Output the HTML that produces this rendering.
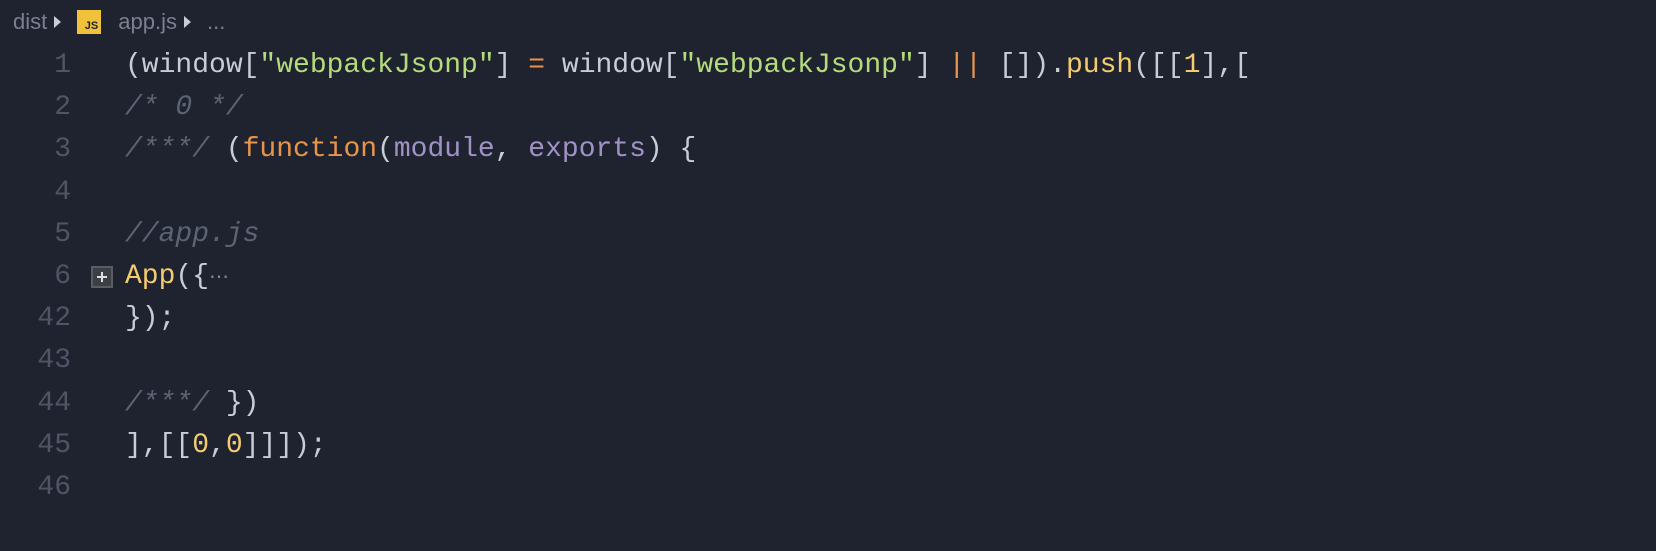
<!DOCTYPE html>
<html><head><meta charset="utf-8"><style>
body{margin:0;width:1656px;height:482px;background:#1f2330;overflow:hidden;font-family:"Liberation Mono",monospace;}
.bc{position:absolute;top:7px;left:13px;font-family:"Liberation Sans",sans-serif;font-size:22px;color:#7a8090;height:28px;line-height:28px;white-space:nowrap}
.bc span{display:inline-block;vertical-align:middle}
.tri{width:0;height:0;border-top:6px solid transparent;border-bottom:6px solid transparent;border-left:7px solid #c8ccd4;margin:0 16px 0 7px}
.js{width:24px;height:24px;background:#f0c23c;color:#1f2330;font-size:11px;font-weight:bold;line-height:32px;text-align:right;box-sizing:border-box;padding-right:3px;margin-right:17px}
.code{position:absolute;top:45px;left:0;font-size:28px;line-height:42.2px;white-space:pre}
.ln{position:absolute;left:0;width:71px;text-align:right;color:#4f5566}
.t{position:absolute;left:125px;color:#c8ccd4}
.s{color:#b5dc7c}.o{color:#e8954a}.y{color:#f4cc70}.c{color:#5c6374;font-style:italic}.p{color:#a192c6}
.fold{position:absolute;left:91px;top:266px;width:22px;height:22px;border:2px solid #5a5d64;background:#3c3f46;box-sizing:border-box}
.fold:before{content:"";position:absolute;left:4px;top:8px;width:10px;height:2px;background:#e0e0e0}
.fold:after{content:"";position:absolute;left:8px;top:4px;width:2px;height:10px;background:#e0e0e0}
</style></head><body>
<div class="bc"><span>dist</span><span class="tri"></span><span class="js">JS</span><span>app.js</span><span class="tri"></span><span>...</span></div>
<div class="code">
<div class="ln" style="top:0">1</div><div class="t" style="top:0">(window[<span class="s">"webpackJsonp"</span>] <span class="o">=</span> window[<span class="s">"webpackJsonp"</span>] <span class="o">||</span> []).<span class="y">push</span>([[<span class="y">1</span>],[</div>
<div class="ln" style="top:42.2px">2</div><div class="t c" style="top:42.2px">/* 0 */</div>
<div class="ln" style="top:84.4px">3</div><div class="t" style="top:84.4px"><span class="c">/***/</span> (<span class="o">function</span>(<span class="p">module</span>, <span class="p">exports</span>) {</div>
<div class="ln" style="top:126.6px">4</div>
<div class="ln" style="top:168.8px">5</div><div class="t c" style="top:168.8px">//app.js</div>
<div class="ln" style="top:211px">6</div><div class="t" style="top:211px"><span class="y">App</span>({<span style="color:#888;font-size:20px">⋯</span></div>
<div class="ln" style="top:253.2px">42</div><div class="t" style="top:253.2px">});</div>
<div class="ln" style="top:295.4px">43</div>
<div class="ln" style="top:337.6px">44</div><div class="t" style="top:337.6px"><span class="c">/***/</span> })</div>
<div class="ln" style="top:379.8px">45</div><div class="t" style="top:379.8px">],[[<span class="y">0</span>,<span class="y">0</span>]]]);</div>
<div class="ln" style="top:422px">46</div>
</div>
<div class="fold"></div>
</body></html>
